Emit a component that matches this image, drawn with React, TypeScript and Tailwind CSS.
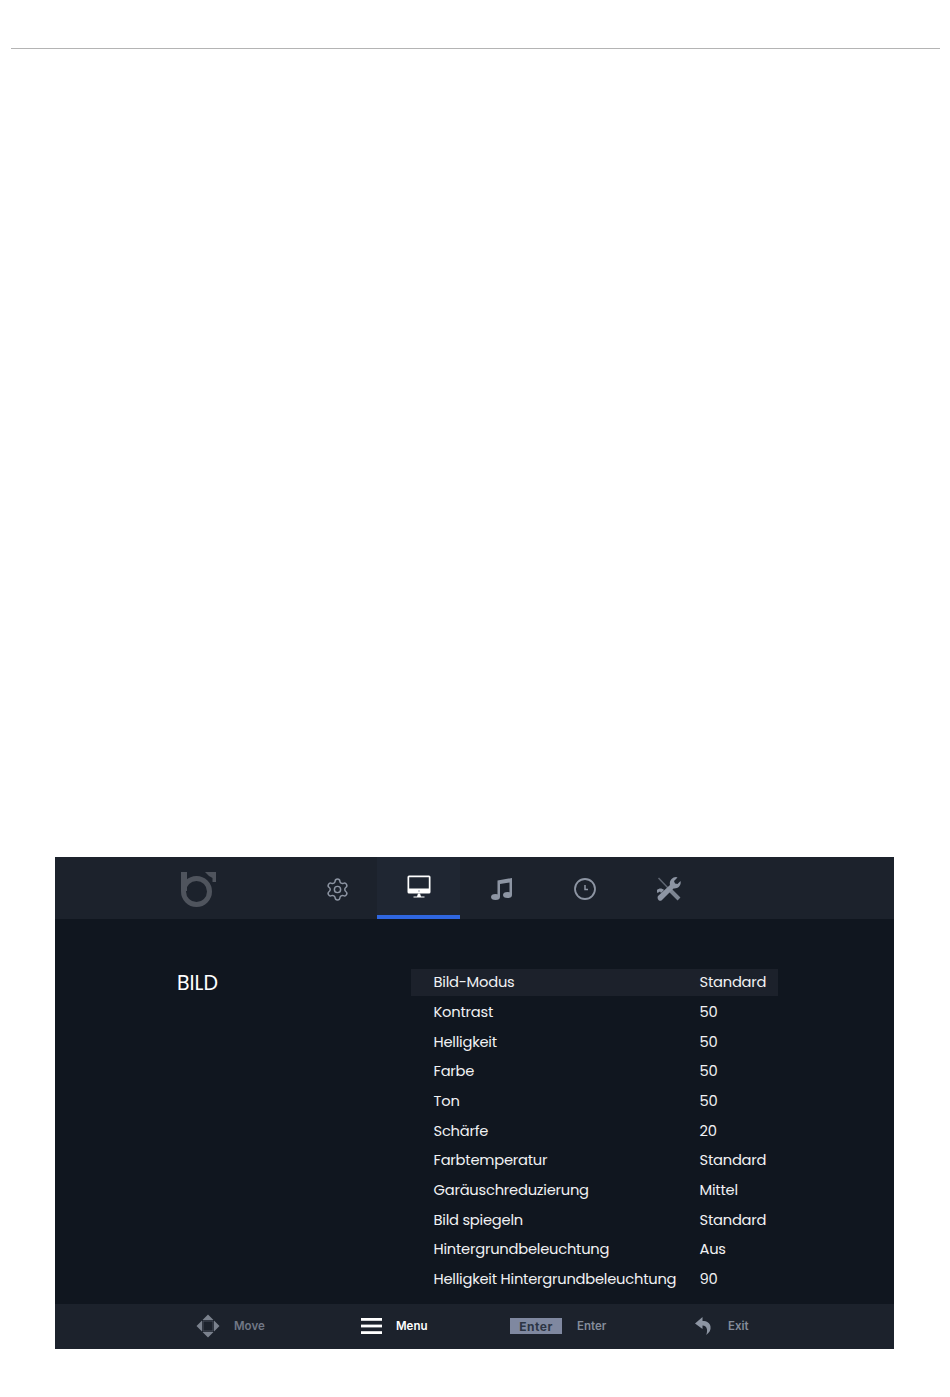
import { Settings } from 'lucide-react'

const rows = [
  ['Bild-Modus', 'Standard'],
  ['Kontrast', '50'],
  ['Helligkeit', '50'],
  ['Farbe', '50'],
  ['Ton', '50'],
  ['Schärfe', '20'],
  ['Farbtemperatur', 'Standard'],
  ['Garäuschreduzierung', 'Mittel'],
  ['Bild spiegeln', 'Standard'],
  ['Hintergrundbeleuchtung', 'Aus'],
  ['Helligkeit Hintergrundbeleuchtung', '90'],
]

const Logo = () => (
  <svg width="36" height="36" viewBox="0 0 36 36" fill="none">
    <circle cx="15.500" cy="19.500" r="13" stroke="#4f545d" strokeWidth="5" />
    <path d="M3 0v19" stroke="#4f545d" strokeWidth="6" />
    <path d="M24 0h11v10h-3.500V6L28 4Z" fill="#4f545d" />
  </svg>
)

const Monitor = () => (
  <svg width="24" height="24" viewBox="0 0 24 24">
    <path
      fillRule="evenodd"
      d="M2 .5h20a1.500 1.500 0 0 1 1.500 1.500v15a1.500 1.500 0 0 1-1.500 1.500H2A1.500 1.500 0 0 1 .5 17V2A1.500 1.500 0 0 1 2 .5Zm.2 1.700V13.500h19.600V2.200Z"
      fill="#fff"
    />
    <circle cx="12" cy="16" r=".8" fill="#8d95a3" />
    <path d="M11 18.500h2l1 3h3.500v1h-11v-1H10Z" fill="#fff" />
  </svg>
)

const Music = () => (
  <svg width="22" height="22" viewBox="0 0 22 22" fill="#8d95a3">
    <path d="M6.500 2.500 21 0v17h-2.500V4.500L9 6v13H6.500Z" />
    <ellipse cx="4.500" cy="19" rx="4.500" ry="3" />
    <ellipse cx="16.500" cy="17" rx="4.500" ry="3" />
  </svg>
)

const ClockIcon = () => (
  <svg width="24" height="24" viewBox="0 0 24 24" fill="none" stroke="#8d95a3">
    <circle cx="12" cy="12" r="10" strokeWidth="1.800" />
    <path d="M12 8v4.500h3" strokeWidth="1.500" />
  </svg>
)

const Tools = () => (
  <svg width="24" height="24" viewBox="0 0 24 24" fill="none">
    <path d="M1.500 1 12 12" stroke="#5f6672" strokeWidth="1.500" />
    <path d="M12 12l10 10" stroke="#7d8592" strokeWidth="4" />
    <path
      d="M1 19 13 8c-1-4 2-8 6-8l1.500.5L17 4l1 2.500 2.500.5L23.500 4c1 4-2 8-7 7.500L5 23c-1 1-2 1-3 .5s-2-3-1-4.500Z"
      fill="#8d95a3"
    />
    <path d="M0 13c2-2 5-2 7 0l-3 3-1-1.500-2.500 1.500c-.5-1-.8-2-.5-3Z" fill="#8d95a3" />
  </svg>
)

const Move = () => (
  <svg width="24" height="24" viewBox="0 0 24 24" fill="#7a818d">
    <path d="M12 .5l5.500 5.500h-11ZM12 23.500 6.500 18h11ZM.5 12 6 6.500v11ZM23.500 12 18 17.500v-11Z" />
    <path d="M7 7h10v10H7Z" fill="none" stroke="#474d58" strokeWidth="1" />
  </svg>
)

const Back = () => (
  <svg width="16" height="18" viewBox="0 0 16 18" fill="#8d95a3">
    <path d="M7.500 0 0 6.500 7.500 12V8.500c2.500 0 4 1.500 4.500 4 .2 2-.2 4-.8 5.500C14.500 15.500 16 13 15.500 9.500 15 6 12 4 7.500 4Z" />
  </svg>
)

export default function App() {
  return (
    <div className="h-[1397px] bg-white pt-[48px] font-['Poppins','Inter',sans-serif]">
      <div className="mx-[10px] ml-[11px] h-px bg-[#b4b4b4]" />
      <div className="ml-[55px] mt-[808px] flex h-[492px] w-[839px] flex-col bg-[#10161f] text-white">
        <div className="flex h-[61.500px] bg-[#1c222c]">
          <div className="flex w-[239px] pl-[126px] pt-[15px]">
            <Logo />
          </div>
          <div className="flex w-[83px] items-center justify-center pl-[3px] pt-[3px]">
            <Settings size={25} strokeWidth={1.400} color="#8d95a3" />
          </div>
          <div className="flex w-[83px] items-center justify-center border-b-[4.500px] border-[#2f66e0] bg-[#1f2632] pt-[3px]">
            <Monitor />
          </div>
          <div className="flex w-[83px] items-center justify-center pt-[3px]">
            <Music />
          </div>
          <div className="flex w-[83px] items-center justify-center pt-[3px]">
            <ClockIcon />
          </div>
          <div className="flex w-[83px] items-center justify-center pl-[3px] pt-[3px]">
            <Tools />
          </div>
        </div>

        <div className="flex flex-1 pl-[122px] pt-[50.500px]">
          <div className="w-[234px] text-[20.500px] leading-[27px]">BILD</div>
          <div className="flex w-[367px] flex-col gap-[2.650px]">
            {rows.map(([label, value], i) => (
              <div
                key={label}
                className={`flex h-[27px] items-center text-[14.700px] tracking-[-0.230px] text-[#f0f1f3] ${
                  i === 0 ? 'bg-[#1c212b]' : ''
                }`}
              >
                <span className="w-[288.500px] whitespace-nowrap pl-[22.500px]">{label}</span>
                <span>{value}</span>
              </div>
            ))}
          </div>
        </div>

        <div className="flex h-[45.500px] items-center bg-[#1c222c] font-['Inter',sans-serif] text-[11.500px] font-semibold text-[#717886]">
          <div className="flex w-[306px] items-center pl-[141px]">
            <Move />
            <span className="ml-[14px]">Move</span>
          </div>
          <div className="flex w-[149px] items-center">
            <svg width="21" height="16" viewBox="0 0 21 16" fill="#fff">
              <rect width="21" height="2.800" />
              <rect y="6.600" width="21" height="2.800" />
              <rect y="13.200" width="21" height="2.800" />
            </svg>
            <span className="ml-[14px] text-white">Menu</span>
          </div>
          <div className="flex w-[185px] items-center">
            <span className="flex h-[16px] w-[52px] items-center justify-center bg-[#7f88a0] pt-[1px] text-[12px] font-bold tracking-[0.5px] text-[#2c3544]">
              Enter
            </span>
            <span className="ml-[15px] text-[#858c9a]">Enter</span>
          </div>
          <div className="flex items-center">
            <Back />
            <span className="ml-[17px] text-[#858c9a]">Exit</span>
          </div>
        </div>
      </div>
    </div>
  )
}
